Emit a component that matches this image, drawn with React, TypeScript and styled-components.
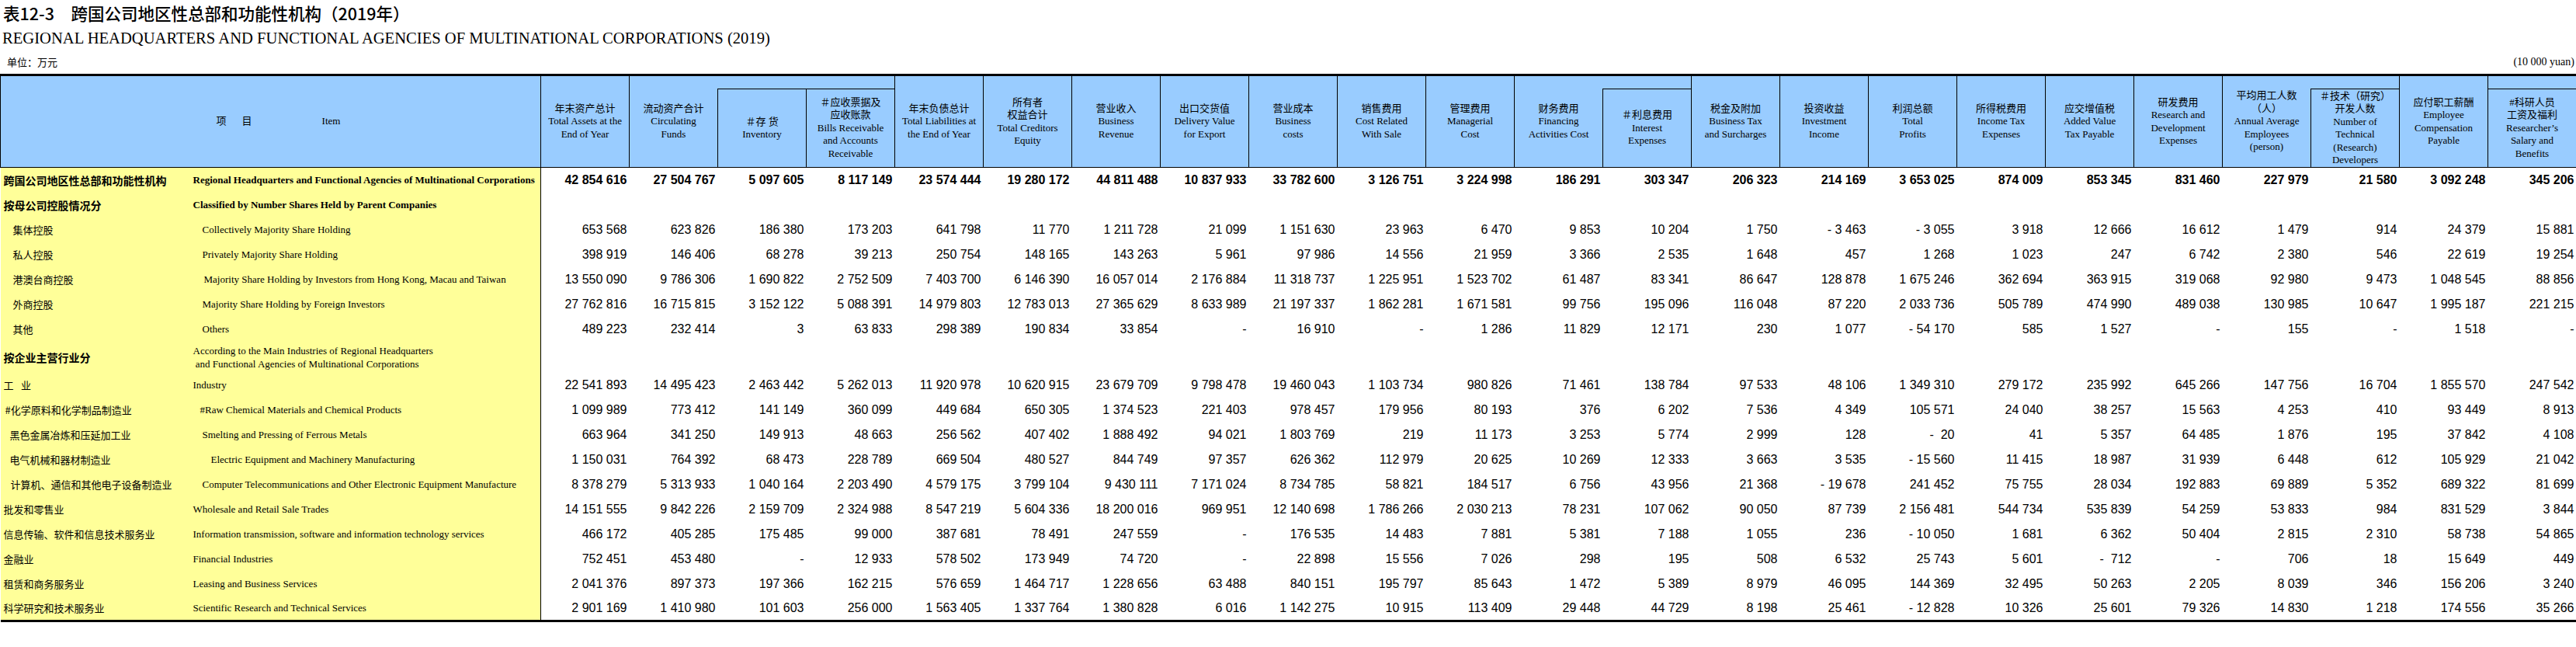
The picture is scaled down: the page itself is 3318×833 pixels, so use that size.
import React from "react";
import styled, { createGlobalStyle } from "styled-components";

const GlobalStyle = createGlobalStyle`
  html, body {
    margin: 0;
    padding: 0;
    background: #ffffff;
  }
  body {
    color: #000000;
    font-family: "Liberation Serif", "Noto Sans CJK SC", serif;
  }
`;

const HEAD_BLUE = "#99ccff";
const ITEM_YELLOW = "#ffff99";
const CJK = `"Noto Sans CJK SC", sans-serif`;
const SERIF = `"Liberation Serif", "Noto Sans CJK SC", serif`;
const NUM = `"Liberation Sans Narrow", "Liberation Sans", sans-serif`;

interface Column {
  lines: string[];
  sub?: boolean;
  parent?: boolean;
}

interface Row {
  cn: string;
  en: string[];
  cnIndent: number;
  enIndent: number;
  bold?: boolean;
  enBold?: boolean;
  tall?: boolean;
  values?: string;
}

const columns: Column[] = [
  { lines: ["年末资产总计", "Total Assets at the", "End of Year"] },
  { lines: ["流动资产合计", "Circulating", "Funds"], parent: true },
  { lines: ["＃存 货", "Inventory"], sub: true },
  {
    lines: ["＃应收票据及", "应收账款", "Bills Receivable", "and Accounts", "Receivable"],
    sub: true,
  },
  { lines: ["年末负债总计", "Total Liabilities at", "the End of Year"] },
  { lines: ["所有者", "权益合计", "Total Creditors", "Equity"] },
  { lines: ["营业收入", "Business", "Revenue"] },
  { lines: ["出口交货值", "Delivery Value", "for Export"] },
  { lines: ["营业成本", "Business", "costs"] },
  { lines: ["销售费用", "Cost Related", "With Sale"] },
  { lines: ["管理费用", "Managerial", "Cost"] },
  { lines: ["财务费用", "Financing", "Activities Cost"], parent: true },
  { lines: ["＃利息费用", "Interest", "Expenses"], sub: true },
  { lines: ["税金及附加", "Business Tax", "and Surcharges"] },
  { lines: ["投资收益", "Investment", "Income"] },
  { lines: ["利润总额", "Total", "Profits"] },
  { lines: ["所得税费用", "Income Tax", "Expenses"] },
  { lines: ["应交增值税", "Added Value", "Tax Payable"] },
  { lines: ["研发费用", "Research and", "Development", "Expenses"] },
  {
    lines: ["平均用工人数", "（人）", "Annual Average", "Employees", "(person)"],
    parent: true,
  },
  {
    lines: ["＃技术（研究）", "开发人数", "Number of", "Technical", "(Research)", "Developers"],
    sub: true,
  },
  { lines: ["应付职工薪酬", "Employee", "Compensation", "Payable"] },
  {
    lines: ["#科研人员", "工资及福利", "Researcher’s", "Salary and", "Benefits"],
    sub: true,
  },
];

const rows: Row[] = [
  {
    cn: "跨国公司地区性总部和功能性机构",
    en: ["Regional Headquarters and Functional Agencies of Multinational Corporations"],
    cnIndent: 4,
    enIndent: 0,
    bold: true,
    enBold: true,
    values:
      "42 854 616|27 504 767|5 097 605|8 117 149|23 574 444|19 280 172|44 811 488|10 837 933|33 782 600|3 126 751|3 224 998|186 291|303 347|206 323|214 169|3 653 025|874 009|853 345|831 460|227 979|21 580|3 092 248|345 206",
  },
  {
    cn: "按母公司控股情况分",
    en: ["Classified by Number Shares Held by Parent Companies"],
    cnIndent: 4,
    enIndent: 0,
    bold: true,
    enBold: true,
  },
  {
    cn: "集体控股",
    en: ["Collectively Majority Share Holding"],
    cnIndent: 16,
    enIndent: 12,
    values:
      "653 568|623 826|186 380|173 203|641 798|11 770|1 211 728|21 099|1 151 630|23 963|6 470|9 853|10 204|1 750|- 3 463|- 3 055|3 918|12 666|16 612|1 479|914|24 379|15 881",
  },
  {
    cn: "私人控股",
    en: ["Privately Majority Share Holding"],
    cnIndent: 16,
    enIndent: 12,
    values:
      "398 919|146 406|68 278|39 213|250 754|148 165|143 263|5 961|97 986|14 556|21 959|3 366|2 535|1 648|457|1 268|1 023|247|6 742|2 380|546|22 619|19 254",
  },
  {
    cn: "港澳台商控股",
    en: ["Majority Share Holding by Investors from Hong Kong, Macau and Taiwan"],
    cnIndent: 16,
    enIndent: 14,
    values:
      "13 550 090|9 786 306|1 690 822|2 752 509|7 403 700|6 146 390|16 057 014|2 176 884|11 318 737|1 225 951|1 523 702|61 487|83 341|86 647|128 878|1 675 246|362 694|363 915|319 068|92 980|9 473|1 048 545|88 856",
  },
  {
    cn: "外商控股",
    en: ["Majority Share Holding by Foreign Investors"],
    cnIndent: 16,
    enIndent: 12,
    values:
      "27 762 816|16 715 815|3 152 122|5 088 391|14 979 803|12 783 013|27 365 629|8 633 989|21 197 337|1 862 281|1 671 581|99 756|195 096|116 048|87 220|2 033 736|505 789|474 990|489 038|130 985|10 647|1 995 187|221 215",
  },
  {
    cn: "其他",
    en: ["Others"],
    cnIndent: 16,
    enIndent: 12,
    values:
      "489 223|232 414|3|63 833|298 389|190 834|33 854|-|16 910|-|1 286|11 829|12 171|230|1 077|- 54 170|585|1 527|-|155|-|1 518|-",
  },
  {
    cn: "按企业主营行业分",
    en: [
      "According to the Main Industries of Regional Headquarters",
      " and Functional Agencies of Multinational Corporations",
    ],
    cnIndent: 4,
    enIndent: 0,
    bold: true,
    tall: true,
  },
  {
    cn: "工\u2002 业",
    en: ["Industry"],
    cnIndent: 4,
    enIndent: 0,
    values:
      "22 541 893|14 495 423|2 463 442|5 262 013|11 920 978|10 620 915|23 679 709|9 798 478|19 460 043|1 103 734|980 826|71 461|138 784|97 533|48 106|1 349 310|279 172|235 992|645 266|147 756|16 704|1 855 570|247 542",
  },
  {
    cn: "#化学原料和化学制品制造业",
    en: ["#Raw Chemical Materials and Chemical Products"],
    cnIndent: 6,
    enIndent: 9,
    values:
      "1 099 989|773 412|141 149|360 099|449 684|650 305|1 374 523|221 403|978 457|179 956|80 193|376|6 202|7 536|4 349|105 571|24 040|38 257|15 563|4 253|410|93 449|8 913",
  },
  {
    cn: "黑色金属冶炼和压延加工业",
    en: ["Smelting and Pressing of Ferrous Metals"],
    cnIndent: 12,
    enIndent: 12,
    values:
      "663 964|341 250|149 913|48 663|256 562|407 402|1 888 492|94 021|1 803 769|219|11 173|3 253|5 774|2 999|128|-  20|41|5 357|64 485|1 876|195|37 842|4 108",
  },
  {
    cn: "电气机械和器材制造业",
    en: ["Electric Equipment and Machinery Manufacturing"],
    cnIndent: 12,
    enIndent: 23,
    values:
      "1 150 031|764 392|68 473|228 789|669 504|480 527|844 749|97 357|626 362|112 979|20 625|10 269|12 333|3 663|3 535|- 15 560|11 415|18 987|31 939|6 448|612|105 929|21 042",
  },
  {
    cn: "计算机、通信和其他电子设备制造业",
    en: ["Computer Telecommunications and Other Electronic Equipment Manufacture"],
    cnIndent: 13,
    enIndent: 12,
    values:
      "8 378 279|5 313 933|1 040 164|2 203 490|4 579 175|3 799 104|9 430 111|7 171 024|8 734 785|58 821|184 517|6 756|43 956|21 368|- 19 678|241 452|75 755|28 034|192 883|69 889|5 352|689 322|81 699",
  },
  {
    cn: "批发和零售业",
    en: ["Wholesale and Retail Sale Trades"],
    cnIndent: 4,
    enIndent: 0,
    values:
      "14 151 555|9 842 226|2 159 709|2 324 988|8 547 219|5 604 336|18 200 016|969 951|12 140 698|1 786 266|2 030 213|78 231|107 062|90 050|87 739|2 156 481|544 734|535 839|54 259|53 833|984|831 529|3 844",
  },
  {
    cn: "信息传输、软件和信息技术服务业",
    en: ["Information transmission, software and information technology services"],
    cnIndent: 4,
    enIndent: 0,
    values:
      "466 172|405 285|175 485|99 000|387 681|78 491|247 559|-|176 535|14 483|7 881|5 381|7 188|1 055|236|- 10 050|1 681|6 362|50 404|2 815|2 310|58 738|54 865",
  },
  {
    cn: "金融业",
    en: ["Financial Industries"],
    cnIndent: 4,
    enIndent: 0,
    values:
      "752 451|453 480|-|12 933|578 502|173 949|74 720|-|22 898|15 556|7 026|298|195|508|6 532|25 743|5 601|-  712|-|706|18|15 649|449",
  },
  {
    cn: "租赁和商务服务业",
    en: ["Leasing and Business Services"],
    cnIndent: 4,
    enIndent: 0,
    values:
      "2 041 376|897 373|197 366|162 215|576 659|1 464 717|1 228 656|63 488|840 151|195 797|85 643|1 472|5 389|8 979|46 095|144 369|32 495|50 263|2 205|8 039|346|156 206|3 240",
  },
  {
    cn: "科学研究和技术服务业",
    en: ["Scientific Research and Technical Services"],
    cnIndent: 4,
    enIndent: 0,
    values:
      "2 901 169|1 410 980|101 603|256 000|1 563 405|1 337 764|1 380 828|6 016|1 142 275|10 915|113 409|29 448|44 729|8 198|25 461|- 12 828|10 326|25 601|79 326|14 830|1 218|174 556|35 266",
  },
];

const Page = styled.div`
  width: 3318px;
  background: #ffffff;
`;

const TitleCn = styled.h1`
  margin: 0;
  height: 34px;
  padding-left: 4px;
  font-family: ${CJK};
  font-size: 21.5px;
  font-weight: 500;
  line-height: 34px;
  white-space: pre;
`;

const TitleEn = styled.h2`
  margin: 0;
  height: 30px;
  padding-left: 3px;
  font-family: "Liberation Serif", serif;
  font-size: 20.6px;
  font-weight: 400;
  line-height: 30px;
  white-space: nowrap;
`;

const UnitBar = styled.div`
  display: flex;
  align-items: center;
  justify-content: space-between;
  height: 31px;
  padding: 0 2px 0 9px;
`;

const UnitCn = styled.span`
  font-family: ${CJK};
  font-size: 13px;
`;

const UnitEn = styled.span`
  font-family: "Liberation Serif", serif;
  font-size: 14px;
`;

const Sheet = styled.table`
  width: 3318px;
  border-collapse: collapse;
  table-layout: fixed;
  border-top: 3px solid #000000;
  border-bottom: 3px solid #000000;
`;

const Col = styled.col<{ $w: number }>`
  width: ${(p) => p.$w}px;
`;

const HeadRow = styled.tr<{ $h: number }>`
  height: ${(p) => p.$h}px;
`;

const HeadCell = styled.th<{ $openLeft?: boolean; $openRight?: boolean }>`
  padding: 0;
  background: ${HEAD_BLUE};
  border: 1px solid #000000;
  ${(p) => p.$openLeft && "border-left: none;"}
  ${(p) => p.$openRight && "border-right: none;"}
  font-family: ${SERIF};
  font-size: 13px;
  font-weight: 400;
  line-height: 16.5px;
  text-align: center;
  vertical-align: middle;
  white-space: nowrap;
`;

const ItemHead = styled.div`
  display: flex;
  align-items: center;
  justify-content: center;
  padding-left: 20px;
  font-size: 13px;
`;

const ItemHeadWord = styled.span<{ $gap: number }>`
  margin-right: ${(p) => p.$gap}px;
  font-family: ${SERIF};
`;

const BodyRow = styled.tr<{ $tall?: boolean }>`
  height: ${(p) => (p.$tall ? 40 : 32)}px;
`;

const ItemCn = styled.td<{ $indent: number; $bold?: boolean }>`
  padding: 0 0 0 ${(p) => p.$indent}px;
  background: ${ITEM_YELLOW};
  font-family: ${CJK};
  font-size: ${(p) => (p.$bold ? 14 : 13)}px;
  font-weight: ${(p) => (p.$bold ? 700 : 400)};
  white-space: pre;
  vertical-align: middle;
`;

const ItemEn = styled.td<{ $indent: number; $bold?: boolean }>`
  padding: 0 0 0 ${(p) => p.$indent}px;
  background: ${ITEM_YELLOW};
  border-right: 1px solid #000000;
  font-family: "Liberation Serif", serif;
  font-size: 13px;
  font-weight: ${(p) => (p.$bold ? 700 : 400)};
  line-height: 17px;
  white-space: pre;
  vertical-align: middle;
`;

const NumCell = styled.td<{ $bold?: boolean }>`
  padding: 0 3px 0 0;
  font-family: ${NUM};
  font-size: 16px;
  font-weight: ${(p) => (p.$bold ? 700 : 400)};
  text-align: right;
  white-space: pre;
  vertical-align: middle;
`;

const HeadLines = ({ lines }: { lines: string[] }) => (
  <>
    {lines.map((line, i) => (
      <React.Fragment key={i}>
        {i > 0 && <br />}
        {line}
      </React.Fragment>
    ))}
  </>
);

// first header row: full-height cells plus the blank strip over the "#" sub columns
const renderTopHeader = () => {
  const cells: React.ReactNode[] = [];
  columns.forEach((col, i) => {
    if (col.sub) {
      if (i > 0 && columns[i - 1].sub) return;
      let span = 1;
      while (columns[i + span]?.sub) span++;
      cells.push(
        <HeadCell key={`g-${i}`} colSpan={span} $openLeft={!!columns[i - 1]?.parent} />
      );
      return;
    }
    cells.push(
      <HeadCell key={i} rowSpan={2} $openRight={col.parent}>
        <HeadLines lines={col.lines} />
      </HeadCell>
    );
  });
  return cells;
};

export default function App() {
  return (
    <Page>
      <GlobalStyle />
      <TitleCn>表12-3　跨国公司地区性总部和功能性机构（2019年）</TitleCn>
      <TitleEn>
        REGIONAL HEADQUARTERS AND FUNCTIONAL AGENCIES OF MULTINATIONAL CORPORATIONS (2019)
      </TitleEn>
      <UnitBar>
        <UnitCn>单位：万元</UnitCn>
        <UnitEn>(10 000 yuan)</UnitEn>
      </UnitBar>
      <Sheet>
        <colgroup>
          <Col $w={248} />
          <Col $w={448} />
          {columns.map((_, i) => (
            <Col key={i} $w={114} />
          ))}
        </colgroup>
        <thead>
          <HeadRow $h={18}>
            <HeadCell colSpan={2} rowSpan={2}>
              <ItemHead>
                <ItemHeadWord $gap={20}>项</ItemHeadWord>
                <ItemHeadWord $gap={90}>目</ItemHeadWord>
                <ItemHeadWord $gap={0}>Item</ItemHeadWord>
              </ItemHead>
            </HeadCell>
            {renderTopHeader()}
          </HeadRow>
          <HeadRow $h={101}>
            {columns.map((col, i) =>
              col.sub ? (
                <HeadCell key={i}>
                  <HeadLines lines={col.lines} />
                </HeadCell>
              ) : null
            )}
          </HeadRow>
        </thead>
        <tbody>
          {rows.map((row, r) => {
            const values = row.values ? row.values.split("|") : columns.map(() => "");
            return (
              <BodyRow key={r} $tall={row.tall}>
                <ItemCn $indent={row.cnIndent} $bold={row.bold}>
                  {row.cn}
                </ItemCn>
                <ItemEn $indent={row.enIndent} $bold={row.enBold}>
                  <HeadLines lines={row.en} />
                </ItemEn>
                {values.map((v, c) => (
                  <NumCell key={c} $bold={r === 0}>
                    {v}
                  </NumCell>
                ))}
              </BodyRow>
            );
          })}
        </tbody>
      </Sheet>
    </Page>
  );
}
